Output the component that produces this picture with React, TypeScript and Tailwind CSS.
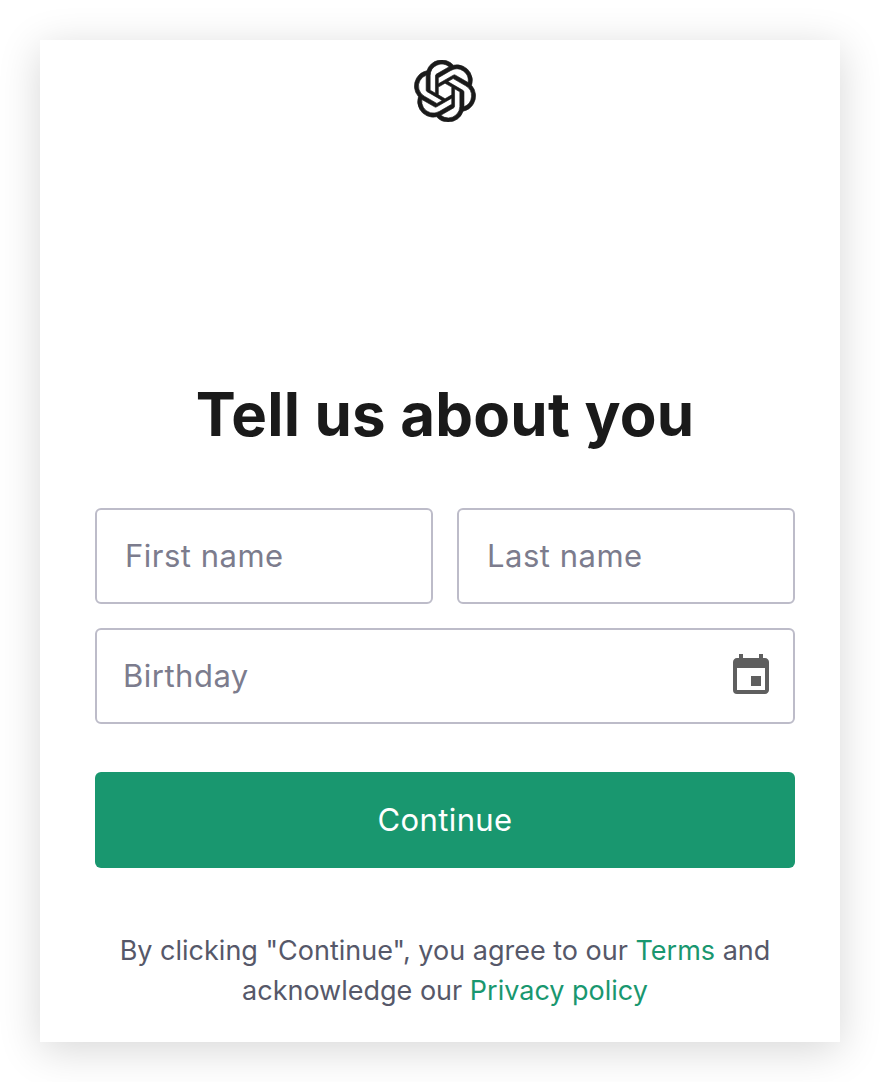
import { SiOpenai } from "react-icons/si";
import { MdEvent } from "react-icons/md";

const NameField = ({ label }: { label: string }) => (
  <div className="flex-1 h-24 rounded-[6px] border-2 border-[#bdbcc9] pl-[28px] flex items-center text-[31px] tracking-[0.5px] text-[#7c7c8d]">
    {label}
  </div>
);

const App = () => {
  return (
    <div className="bg-white h-[1082px] w-[880px] p-10 overflow-hidden font-['Inter',sans-serif]">
      <div className="bg-white h-[1002px] pl-[55px] pr-[45px] pt-5 flex flex-col shadow-[0_8px_40px_rgba(0,0,0,0.16)]">
        <div className="flex justify-center">
          <SiOpenai className="w-[62px] h-[62px] text-[#1a1a1a]" stroke="currentColor" strokeWidth={0.25} />
        </div>

        <h1 className="mt-[256px] text-center text-[60px] tracking-[0.2px] leading-[72px] font-bold text-[#1a1a1a]">
          Tell us about you
        </h1>

        <div className="mt-[58px] flex gap-6">
          <NameField label="First name" />
          <NameField label="Last name" />
        </div>

        <div className="mt-6 h-24 rounded-[6px] border-2 border-[#bdbcc9] pl-[26px] pr-[18px] flex items-center justify-between text-[31px] tracking-[0.5px] text-[#7c7c8d]">
          <span>Birthday</span>
          <MdEvent className="w-12 h-12 text-[#5f5f5f]" />
        </div>

        <button className="mt-12 h-24 rounded-[6px] bg-[#19976f] text-white text-[31px] tracking-[0.4px]">
          Continue
        </button>

        <p className="mt-[63px] text-center text-[27px] leading-10 text-[#565869]">
          By clicking "Continue", you agree to our <span className="text-[#19976f]">Terms</span> and
          <br />
          acknowledge our <span className="text-[#19976f]">Privacy policy</span>
        </p>
      </div>
    </div>
  );
};

export default App;
